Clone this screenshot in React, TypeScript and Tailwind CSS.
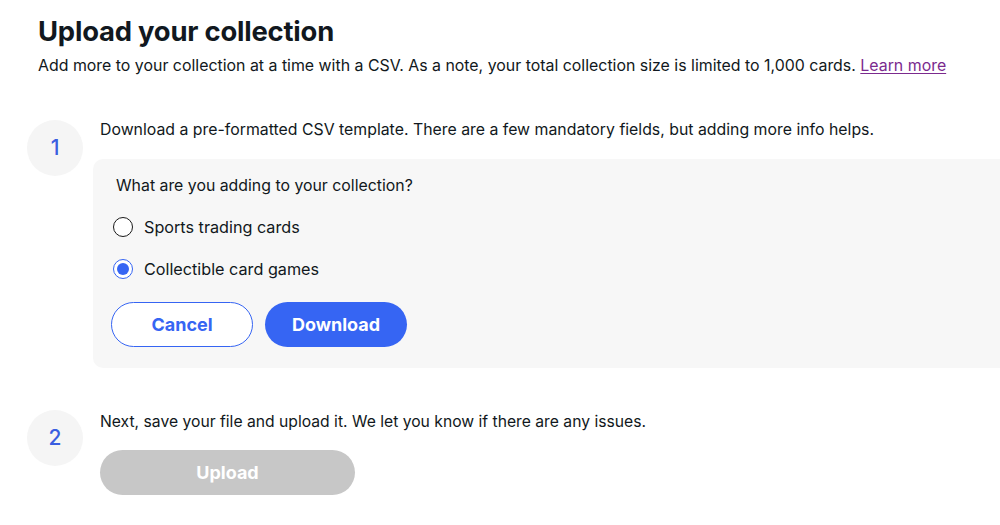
import React, { useState } from "react";

const font = { fontFamily: "Inter, 'Noto Sans', 'Liberation Sans', sans-serif" };

const StepBadge = ({ n }: { n: number }) => (
  <div className="flex h-[56px] w-[56px] shrink-0 items-center justify-center rounded-full bg-[#f5f5f5] text-[21px] font-medium text-[#3a5ee0]">
    {n}
  </div>
);

const Radio = ({ checked, label, onClick }: { checked: boolean; label: string; onClick: () => void }) => (
  <button type="button" onClick={onClick} className="flex h-[42px] items-center gap-[11px] text-left">
    <span
      className={
        checked
          ? "flex h-[20px] w-[20px] items-center justify-center rounded-full border border-[#3665f3] bg-white"
          : "flex h-[20px] w-[20px] items-center justify-center rounded-full border border-[#191919] bg-white"
      }
    >
      {checked && <span className="h-[12px] w-[12px] rounded-full bg-[#3665f3]" />}
    </span>
    <span className="text-[16.2px] text-[#111820]">{label}</span>
  </button>
);

export default function App() {
  const [kind, setKind] = useState<"sports" | "ccg">("ccg");

  return (
    <div className="min-h-[525px] w-[1000px] overflow-hidden bg-white text-[#111820]" style={font}>
      <div className="pl-[38px] pt-[14px]">
        <h1 className="text-[27.4px] font-bold leading-[34px] tracking-[-0.2px]">Upload your collection</h1>
        <p className="mt-[7px] text-[15.9px] leading-[22px]">
          Add more to your collection at a time with a CSV. As a note, your total collection size is limited to 1,000 cards.{" "}
          <a href="#" className="text-[#7b2a8e] underline underline-offset-2">
            Learn more
          </a>
        </p>
      </div>

      {/* step 1 */}
      <div className="mt-[43px] flex items-start gap-[17px] pl-[27px]">
        <div className="pt-[0px]">
          <StepBadge n={1} />
        </div>
        <div className="flex-1">
          <p className="text-[15.85px] leading-[20px]">
            Download a pre-formatted CSV template. There are a few mandatory fields, but adding more info helps.
          </p>
          <div className="-ml-[7px] mt-[19px] rounded-l-[10px] bg-[#f7f7f7] pb-[21px] pl-[20px] pr-4 pt-[17px]">
            <p className="ml-[3px] text-[15.85px] leading-[20px]">What are you adding to your collection?</p>
            <div className="mt-[10px] flex flex-col">
              <Radio checked={kind === "sports"} label="Sports trading cards" onClick={() => setKind("sports")} />
              <Radio checked={kind === "ccg"} label="Collectible card games" onClick={() => setKind("ccg")} />
            </div>
            <div className="-ml-[2px] mt-[12px] flex gap-[12px]">
              <button className="h-[45px] w-[142px] rounded-full border border-[#3665f3] bg-white text-[18px] font-bold text-[#3665f3]">
                Cancel
              </button>
              <button className="h-[45px] w-[142px] rounded-full bg-[#3665f3] text-[18px] font-bold text-white">
                Download
              </button>
            </div>
          </div>
        </div>
      </div>

      {/* step 2 */}
      <div className="mt-[42px] flex items-start gap-[17px] pl-[27px]">
        <StepBadge n={2} />
        <div className="flex-1 pt-[2px]">
          <p className="text-[15.7px] leading-[20px]">Next, save your file and upload it. We let you know if there are any issues.</p>
          <button disabled className="mt-[18px] h-[45px] w-[255px] rounded-full bg-[#c7c7c7] text-[18px] font-bold text-white">
            Upload
          </button>
        </div>
      </div>
    </div>
  );
}
